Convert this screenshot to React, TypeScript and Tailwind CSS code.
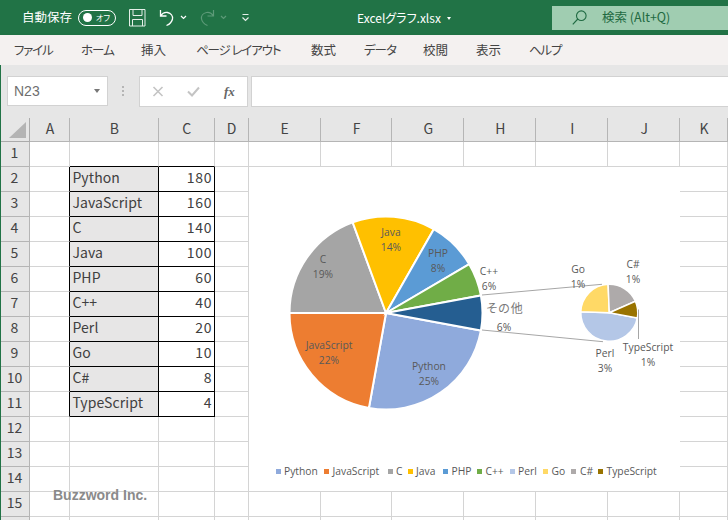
import React from "react";

const uiFont = "[font-family:'Noto_Sans_CJK_JP','Noto_Sans',sans-serif] [font-feature-settings:'palt']";

const tabs = [
  { label: "ファイル", width: 67, track: "tracking-[-1.2px]" },
  { label: "ホーム", width: 60, track: "tracking-[-1px]" },
  { label: "挿入", width: 55, track: "tracking-normal" },
  { label: "ページ レイアウト", width: 115, track: "tracking-[-1.1px]" },
  { label: "数式", width: 53, track: "tracking-normal" },
  { label: "データ", width: 59, track: "tracking-[-1px]" },
  { label: "校閲", width: 53, track: "tracking-normal" },
  { label: "表示", width: 53, track: "tracking-normal" },
  { label: "ヘルプ", width: 40, track: "tracking-[-1.2px]" },
];

const columns = [
  { name: "A", width: "w-[40px]" },
  { name: "B", width: "w-[89px]" },
  { name: "C", width: "w-[56px]" },
  { name: "D", width: "w-[34px]" },
  { name: "E", width: "w-[72px]" },
  { name: "F", width: "w-[72px]" },
  { name: "G", width: "w-[72px]" },
  { name: "H", width: "w-[72px]" },
  { name: "I", width: "w-[72px]" },
  { name: "J", width: "w-[72px]" },
  { name: "K", width: "w-[48px]" },
];

const data = [
  ["Python", 180],
  ["JavaScript", 160],
  ["C", 140],
  ["Java", 100],
  ["PHP", 60],
  ["C++", 40],
  ["Perl", 20],
  ["Go", 10],
  ["C#", 8],
  ["TypeScript", 4],
] as const;

const rows = Array.from({ length: 16 }, (_, i) => i + 1);

function slice(cx: number, cy: number, r: number, from: number, to: number) {
  const rad = (d: number) => (d * Math.PI) / 180;
  const x1 = cx + r * Math.cos(rad(from));
  const y1 = cy + r * Math.sin(rad(from));
  const x2 = cx + r * Math.cos(rad(to));
  const y2 = cy + r * Math.sin(rad(to));
  const large = to - from > 180 ? 1 : 0;
  return `M${cx} ${cy}L${x1} ${y1}A${r} ${r} 0 ${large} 1 ${x2} ${y2}Z`;
}

const mainSlices = [
  { from: 10.5, to: 100.2, color: "#8faadc" },
  { from: 100.2, to: 180, color: "#ed7d31" },
  { from: 180, to: 249.8, color: "#a5a5a5" },
  { from: 249.8, to: 299.7, color: "#ffc000" },
  { from: 299.7, to: 329.6, color: "#5b9bd5" },
  { from: 329.6, to: 349.5, color: "#70ad47" },
  { from: 349.5, to: 370.5, color: "#255e91" },
];

const subSlices = [
  { from: 10.5, to: 181.9, color: "#b4c7e7" },
  { from: 181.9, to: 267.6, color: "#ffd966" },
  { from: 267.6, to: 336.2, color: "#aeaaaa" },
  { from: 336.2, to: 370.5, color: "#997300" },
];

const labels = [
  { x: 391, y: 232, a: "Java", b: "14%" },
  { x: 438, y: 253, a: "PHP", b: "8%" },
  { x: 323, y: 259, a: "C", b: "19%" },
  { x: 329, y: 345, a: "JavaScript", b: "22%" },
  { x: 429, y: 366, a: "Python", b: "25%" },
  { x: 489, y: 271, a: "C++", b: "6%" },
  { x: 578, y: 269, a: "Go", b: "1%" },
  { x: 633, y: 264, a: "C#", b: "1%" },
  { x: 605, y: 353, a: "Perl", b: "3%" },
  { x: 648, y: 347, a: "TypeScript", b: "1%" },
];

const legend = [
  { x: 276, tx: 284, color: "#8faadc", label: "Python" },
  { x: 324, tx: 332.5, color: "#ed7d31", label: "JavaScript" },
  { x: 388, tx: 396, color: "#a5a5a5", label: "C" },
  { x: 408, tx: 416, color: "#ffc000", label: "Java" },
  { x: 443, tx: 451.5, color: "#5b9bd5", label: "PHP" },
  { x: 477, tx: 485.5, color: "#70ad47", label: "C++" },
  { x: 510, tx: 518, color: "#b4c7e7", label: "Perl" },
  { x: 543, tx: 551.5, color: "#ffd966", label: "Go" },
  { x: 571, tx: 580, color: "#aeaaaa", label: "C#" },
  { x: 598, tx: 606.5, color: "#997300", label: "TypeScript" },
];

function TitleBar() {
  return (
    <div className="flex h-[35px] items-center bg-[#217346] text-white">
      <span className="ml-[22px] w-[55px] text-[12.5px]">自動保存</span>
      <div className="ml-[1px] flex h-[16px] w-[38px] items-center justify-between rounded-full border border-white px-[4px]">
        <span className="h-[9px] w-[9px] rounded-full bg-white" />
        <span className="mr-[1px] text-[8px] leading-none">オフ</span>
      </div>
      <svg className="ml-[13px]" width="17" height="18" viewBox="0 0 17 18" fill="none" stroke="#e4efe8" strokeWidth="1">
        <path d="M.5.5h15.5v16.5H.5zM4 .5v6h9v-6M3.500 17v-6.500h10V17" />
      </svg>
      <svg className="ml-[13px]" width="16" height="18" viewBox="0 0 16 18" fill="none" stroke="#fff" strokeWidth="1.300">
        <path d="M1.500 1v6h6M1.500 7C3.500 4 6 3 8.500 3.500c3.500.7 5.500 3.500 5 6.500-.5 2.500-2.500 5-6 6.500" />
      </svg>
      <svg className="ml-[5px]" width="7" height="5" viewBox="0 0 7 5" fill="none" stroke="#fff" strokeWidth="1.200">
        <path d="M1 1l2.500 2.500L6 1" />
      </svg>
      <svg className="ml-[12px]" width="16" height="18" viewBox="0 0 16 18" fill="none" stroke="#5d9a78" strokeWidth="1.200">
        <path d="M14.500 1v6h-6M14.500 7C12.500 4 10 3 7.500 3.500c-3.500.7-5.500 3.500-5 6.500.5 2.500 2.500 5 6 6.500" />
      </svg>
      <svg className="ml-[5px]" width="7" height="5" viewBox="0 0 7 5" fill="none" stroke="#5d9a78" strokeWidth="1.200">
        <path d="M1 1l2.500 2.500L6 1" />
      </svg>
      <svg className="ml-[14px]" width="9" height="9" viewBox="0 0 9 9" fill="none" stroke="#e4efe8" strokeWidth="1.200">
        <path d="M1.500 1.500h6M1.500 4.500l3 3 3-3" />
      </svg>
      <span className="ml-[107px] w-[90px] whitespace-nowrap text-[12px]">Excelグラフ.xlsx</span>
      <span className="mt-[1px] h-0 w-0 border-x-[2.5px] border-t-[3px] border-x-transparent border-t-white" />
      <div className="ml-[101px] flex h-[24px] w-[176px] items-center bg-[#a0cdb1] text-[#1f6a42]">
        <svg className="ml-[20px]" width="15" height="15" viewBox="0 0 15 15" fill="none" stroke="#1f6a42" strokeWidth="1.100">
          <circle cx="9.300" cy="5.700" r="4.800" />
          <path d="M5.800 9L.8 14.300" />
        </svg>
        <span className="ml-[15px] whitespace-nowrap text-[12.5px]">検索 (Alt+Q)</span>
      </div>
    </div>
  );
}

function RibbonTabs() {
  return (
    <div className="flex h-[30px] items-center bg-[#f4f1f0] pl-[14px] text-[12.5px] text-[#444444] shadow-[0_2px_4px_rgba(0,0,0,0.14)]">
      {tabs.map((tab) => (
        <span key={tab.label} className={`whitespace-nowrap ${tab.track}`} style={{ width: tab.width }}>
          {tab.label}
        </span>
      ))}
    </div>
  );
}

function FormulaBar() {
  return (
    <div className="flex h-[53px] items-start bg-[#e6e6e6] pl-[7px] pt-[11px]">
      <div className="flex h-[30px] w-[101px] items-center justify-between border border-[#d2d2d2] bg-white pl-[6px] pr-[7px] text-[14px] text-[#6e6e6e]">
        <span className="[font-family:'Liberation_Sans',sans-serif]">N23</span>
        <span className="h-0 w-0 border-x-[3.5px] border-t-[4px] border-x-transparent border-t-[#777777]" />
      </div>
      <div className="ml-[14px] mt-[10px] flex w-[3px] flex-col gap-[2px]">
        <span className="h-[2px] w-[2px] bg-[#b5b5b5]" />
        <span className="h-[2px] w-[2px] bg-[#b5b5b5]" />
        <span className="h-[2px] w-[2px] bg-[#b5b5b5]" />
      </div>
      <div className="ml-[14px] flex h-[31px] w-[109px] items-center border border-[#d2d2d2] bg-white">
        <svg className="ml-[12px]" width="12" height="11" viewBox="0 0 12 11" fill="none" stroke="#c4c4c4" strokeWidth="1.600">
          <path d="M1.500 1l9 9M10.500 1l-9 9" />
        </svg>
        <svg className="ml-[23px]" width="13" height="11" viewBox="0 0 13 11" fill="none" stroke="#c4c4c4" strokeWidth="2">
          <path d="M1 5.500l4 4L12 1.500" />
        </svg>
        <span className="ml-[24px] font-['Liberation_Serif',serif] text-[13px] font-bold italic leading-none text-[#666666]">
          fx
        </span>
      </div>
      <div className="ml-[3px] h-[31px] flex-1 border-y border-l border-[#d2d2d2] bg-white" />
    </div>
  );
}

function ColumnHeader() {
  return (
    <div className="flex h-[24px] bg-[#e6e6e6]">
      <div className="relative w-[30px] border-b border-r border-[#ababab]">
        <span className="absolute bottom-[3px] right-[3px] h-0 w-0 border-b-[16px] border-l-[17px] border-b-[#b4b4b4] border-l-transparent" />
      </div>
      {columns.map((col) => (
        <div
          key={col.name}
          className={`${col.width} flex items-center justify-center border-b border-r border-[#b5b5b5] pb-[2px] pl-[1px] text-[14px] text-[#444444]`}
        >
          {col.name}
        </div>
      ))}
    </div>
  );
}

function cellClass(colIdx: number, row: number) {
  const inTable = row >= 2 && row <= 11;
  // the table's black frame is drawn by right and bottom borders of the neighbours
  const blackRight = inTable && colIdx <= 2;
  const blackBottom = row >= 1 && row <= 11 && (colIdx === 1 || colIdx === 2);
  const right = blackRight ? "border-r-black" : "border-r-[#d4d4d4]";
  const bottom = blackBottom ? "border-b-black" : "border-b-[#d4d4d4]";
  const fill = inTable && colIdx === 1 ? "bg-[#e7e6e6]" : "";
  return `${right} ${bottom} ${fill}`;
}

function Sheet() {
  return (
    <div className="flex-1 overflow-hidden">
      {rows.map((row) => {
        const rowData = row >= 2 && row <= 11 ? data[row - 2] : null;
        return (
          <div key={row} className="flex h-[25px]">
            <div className="flex w-[30px] items-center justify-center border-b border-r border-[#b5b5b5] bg-[#e6e6e6] pb-[3px] text-[14px] text-[#444444]">
              {row < 16 ? row : null}
            </div>
            {columns.map((col, colIdx) => (
              <div
                key={col.name}
                className={`${col.width} flex items-center border-b border-r pb-[3px] ${cellClass(colIdx, row)} text-[14px] text-[#404040]`}
              >
                {rowData && colIdx === 1 && <span className="pl-[2.500px] tracking-[0.1px]">{rowData[0]}</span>}
                {rowData && colIdx === 2 && <span className="ml-auto pr-[1.500px] tracking-[0.7px]">{rowData[1]}</span>}
              </div>
            ))}
          </div>
        );
      })}
    </div>
  );
}

function Chart() {
  return (
    <svg
      className="absolute left-[249px] top-[167px] bg-white"
      width="431"
      height="324"
      viewBox="249 167 431 324"
    >
      {mainSlices.map((s) => (
        <path key={s.color} d={slice(386, 313, 96.500, s.from, s.to)} fill={s.color} stroke="#fff" strokeWidth="2" />
      ))}
      {subSlices.map((s) => (
        <path key={s.color} d={slice(609.300, 312.700, 28.500, s.from, s.to)} fill={s.color} stroke="#fff" strokeWidth="1.500" />
      ))}
      <g stroke="#a6a6a6" strokeWidth="1" fill="none">
        <path d="M482 295L602 284.300" />
        <path d="M482 330L603 341.700" />
        <path d="M638.500 309.500V339" />
      </g>
      <g fontFamily="'Open Sans','Noto Sans',sans-serif" fontSize="10.3" fill="#595959" textAnchor="middle">
        {labels.map((l) => (
          <g key={l.a}>
            <text x={l.x} y={l.y + 3.500}>{l.a}</text>
            <text x={l.x} y={l.y + 18.500}>{l.b}</text>
          </g>
        ))}
        <text x="505" y="313" fontSize="12" fill="#7a7a7a" letterSpacing="1" fontFamily="'Noto Sans CJK JP',sans-serif">その他</text>
        <text x="504" y="331">6%</text>
      </g>
      <g fontFamily="'Open Sans','Noto Sans',sans-serif" fontSize="10.3" fill="#595959">
        {legend.map((l) => (
          <g key={l.label}>
            <rect x={l.x} y="469" width="5" height="5" fill={l.color} />
            <text x={l.tx} y="475">{l.label}</text>
          </g>
        ))}
      </g>
    </svg>
  );
}

export default function App() {
  return (
    <div className={`relative flex h-[520px] w-[728px] flex-col overflow-hidden bg-white ${uiFont}`}>
      <TitleBar />
      <RibbonTabs />
      <FormulaBar />
      <ColumnHeader />
      <Sheet />
      <Chart />
      <span className="absolute left-[53px] top-[485px] text-[14px] font-bold leading-[20px] text-[#8a8a8a] [font-family:'Liberation_Sans',sans-serif]">
        Buzzword Inc.
      </span>
      <div className="absolute bottom-0 left-0 top-[65px] w-[1px] bg-[#217346]" />
    </div>
  );
}
